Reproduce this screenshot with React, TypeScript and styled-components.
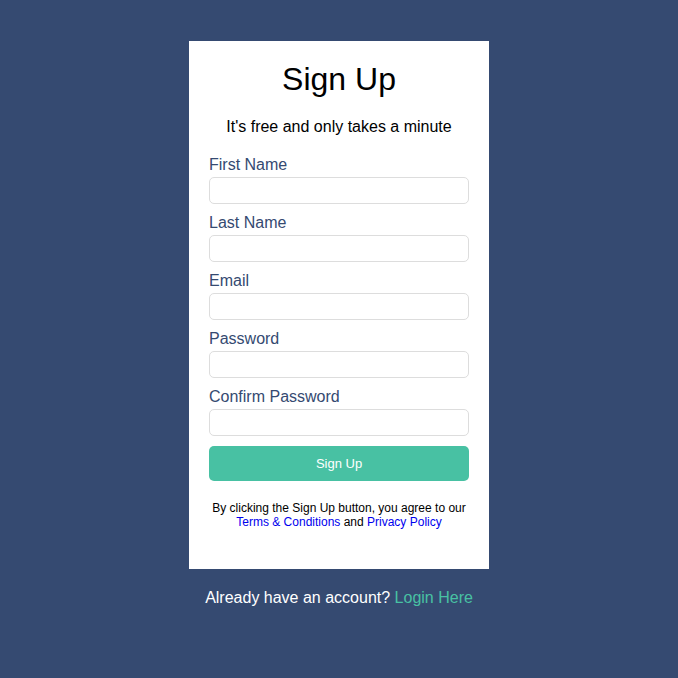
import React from "react";
import styled, { createGlobalStyle } from "styled-components";

const Global = createGlobalStyle`
  html, body { margin: 0; padding: 0; background: #354a71; }
  body { font-family: "Liberation Sans", Arial, sans-serif; }
  * { box-sizing: border-box; }
`;

const Page = styled.div`
  min-height: 678px;
  display: flex;
  flex-direction: column;
  align-items: center;
  padding-top: 41px;
`;

const Card = styled.form`
  width: 300px;
  background: #fff;
  padding: 20px 20px 40px;
  display: flex;
  flex-direction: column;
`;

const Title = styled.h1`
  margin: 0;
  font-size: 32px;
  font-weight: 400;
  line-height: 37px;
  text-align: center;
  color: #000;
`;

const Subtitle = styled.p`
  margin: 20px 0 19px;
  font-size: 16px;
  line-height: 18px;
  text-align: center;
  color: #000;
`;

const Field = styled.div`
  display: flex;
  flex-direction: column;
  gap: 3px;
  margin-bottom: 9px;
`;

const Label = styled.label`
  padding-top: 1px;
  font-size: 16px;
  line-height: 18px;
  color: #354a71;
`;

const Input = styled.input`
  height: 27px;
  width: 100%;
  border: 1px solid #ddd;
  border-radius: 5px;
  padding: 0 8px;
  font-family: inherit;
  font-size: 14px;
  outline: none;
`;

const Button = styled.button`
  margin-top: 1px;
  height: 35px;
  border: none;
  border-radius: 5px;
  background: #48c1a3;
  color: #fff;
  font-family: inherit;
  font-size: 13px;
  cursor: pointer;
`;

const Terms = styled.p`
  margin: 20px 0 0;
  font-size: 12px;
  line-height: 14px;
  text-align: center;
  color: #000;
`;

const TermsLink = styled.a`
  color: #0000ee;
  text-decoration: none;
`;

const Footer = styled.p`
  margin: 20px 0 0;
  font-size: 16px;
  line-height: 18px;
  color: #fff;
`;

const LoginLink = styled.a`
  color: #48c1a3;
  text-decoration: none;
`;

const fields = ["First Name", "Last Name", "Email", "Password", "Confirm Password"];

export default function App() {
  return (
    <>
      <Global />
      <Page>
        <Card onSubmit={(e) => e.preventDefault()}>
          <Title>Sign Up</Title>
          <Subtitle>It's free and only takes a minute</Subtitle>
          {fields.map((f) => (
            <Field key={f}>
              <Label>{f}</Label>
              <Input type={f.includes("Password") ? "password" : f === "Email" ? "email" : "text"} />
            </Field>
          ))}
          <Button type="submit">Sign Up</Button>
          <Terms>
            By clicking the Sign Up button, you agree to our
            <br />
            <TermsLink href="#">Terms &amp; Conditions</TermsLink> and{" "}
            <TermsLink href="#">Privacy Policy</TermsLink>
          </Terms>
        </Card>
        <Footer>
          Already have an account? <LoginLink href="#">Login Here</LoginLink>
        </Footer>
      </Page>
    </>
  );
}
